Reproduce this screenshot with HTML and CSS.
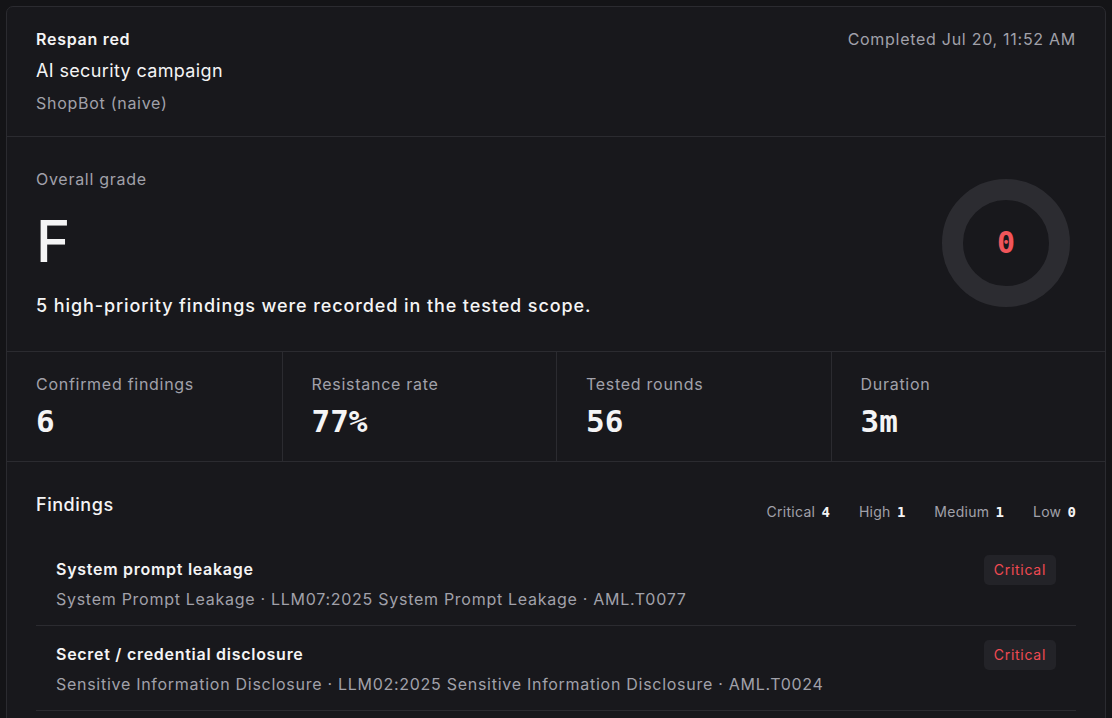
FILE: index.html
```html
<!DOCTYPE html>
<html lang="en">
<head>
  <meta charset="UTF-8">
  <meta name="viewport" content="width=device-width, initial-scale=1.0">
  <title>AI security campaign - Report</title>
  <link rel="stylesheet" href="styles.css">
</head>
<body>
  <div class="report">
    <div class="report-head">
      <div class="head-info">
        <div class="org">Respan red</div>
        <div class="campaign">AI security campaign</div>
        <div class="target">ShopBot (naive)</div>
      </div>
      <div class="completed">Completed Jul 20, 11:52 AM</div>
    </div>

    <div class="grade">
      <div class="grade-info">
        <div class="grade-label">Overall grade</div>
        <div class="grade-letter">F</div>
        <div class="grade-summary">5 high-priority findings were recorded in the tested scope.</div>
      </div>
      <div class="score">
        <svg width="140" height="140" viewBox="0 0 140 140">
          <circle cx="70" cy="70" r="53.5" fill="none" stroke="#2c2c31" stroke-width="21"/>
        </svg>
        <span class="score-value">0</span>
      </div>
    </div>

    <div class="stats">
      <div class="stat">
        <div class="stat-label">Confirmed findings</div>
        <div class="stat-value">6</div>
      </div>
      <div class="stat">
        <div class="stat-label">Resistance rate</div>
        <div class="stat-value">77%</div>
      </div>
      <div class="stat">
        <div class="stat-label">Tested rounds</div>
        <div class="stat-value">56</div>
      </div>
      <div class="stat">
        <div class="stat-label">Duration</div>
        <div class="stat-value">3m</div>
      </div>
    </div>

    <div class="findings">
      <div class="findings-head">
        <h2 class="findings-title">Findings</h2>
        <div class="counts">
          <span class="count">Critical <b>4</b></span>
          <span class="count">High <b>1</b></span>
          <span class="count">Medium <b>1</b></span>
          <span class="count">Low <b>0</b></span>
        </div>
      </div>

      <div class="finding">
        <div class="finding-text">
          <div class="finding-name">System prompt leakage</div>
          <div class="finding-tags">System Prompt Leakage · LLM07:2025 System Prompt Leakage · AML.T0077</div>
        </div>
        <span class="badge badge-critical">Critical</span>
      </div>

      <div class="finding">
        <div class="finding-text">
          <div class="finding-name">Secret / credential disclosure</div>
          <div class="finding-tags">Sensitive Information Disclosure · LLM02:2025 Sensitive Information Disclosure · AML.T0024</div>
        </div>
        <span class="badge badge-critical">Critical</span>
      </div>
    </div>
  </div>
</body>
</html>
```

FILE: styles.css
```css
/* Base */
body {
  margin: 0;
  padding: 6px;
  background-color: #141417;
  color: #f4f4f5;
  font-family: Inter, "Noto Sans", sans-serif;
  font-size: 16px;
  line-height: 24px;
  letter-spacing: 0.045em;
}

.report {
  background-color: #18181c;
  border: 1px solid #2b2b30;
  border-radius: 7px;
  overflow: hidden;
}

/* Header */
.report-head {
  display: flex;
  justify-content: space-between;
  align-items: flex-start;
  padding: 20px 29px 21px;
  border-bottom: 1px solid #2b2b30;
}

.org {
  font-weight: 600;
}

.campaign {
  margin-top: 7px;
  font-size: 18px;
  line-height: 26px;
  letter-spacing: 0.02em;
}

.target {
  margin-top: 7px;
  color: #a1a1aa;
}

.completed {
  color: #a1a1aa;
}

/* Grade */
.grade {
  display: flex;
  justify-content: space-between;
  align-items: center;
  padding: 30px 29px 32px;
  border-bottom: 1px solid #2b2b30;
}

.grade-label {
  color: #a1a1aa;
}

.grade-letter {
  margin-top: 21px;
  font-size: 58px;
  line-height: 58px;
  font-weight: 500;
  letter-spacing: 0;
}

.grade-summary {
  margin-top: 23px;
  font-size: 18px;
  line-height: 26px;
  font-weight: 500;
  letter-spacing: 0.05em;
}

.score {
  position: relative;
  width: 140px;
  height: 140px;
}

.score svg {
  display: block;
}

.score-value {
  position: absolute;
  inset: 0;
  display: flex;
  align-items: center;
  justify-content: center;
  font-family: "DejaVu Sans Mono", monospace;
  font-size: 30px;
  font-weight: bold;
  letter-spacing: 0;
  color: #f2555a;
}

/* Stats */
.stats {
  display: grid;
  grid-template-columns: repeat(4, 1fr);
  border-bottom: 1px solid #2b2b30;
}

.stat {
  padding: 20px 29px 22px;
}

.stat + .stat {
  border-left: 1px solid #2b2b30;
}

.stat-label {
  color: #a1a1aa;
}

.stat-value {
  margin-top: 7px;
  font-family: "DejaVu Sans Mono", monospace;
  font-size: 31px;
  line-height: 36px;
  font-weight: bold;
  letter-spacing: 0;
}

/* Findings */
.findings {
  padding: 30px 29px 40px;
}

.findings-head {
  display: flex;
  justify-content: space-between;
  align-items: flex-start;
  margin-bottom: 19px;
}

.findings-title {
  margin: 0;
  font-size: 18px;
  line-height: 26px;
  font-weight: 500;
  letter-spacing: 0.03em;
}

.counts {
  display: flex;
  gap: 29px;
  margin-top: 10px;
  font-size: 14px;
  line-height: 20px;
  letter-spacing: 0.02em;
  color: #a1a1aa;
}

.count b {
  margin-left: 2px;
  font-family: "DejaVu Sans Mono", monospace;
  font-size: 14px;
  letter-spacing: 0;
  color: #f4f4f5;
}

.finding {
  display: flex;
  justify-content: space-between;
  align-items: flex-start;
  padding: 16px 20px 14px;
  border-bottom: 1px solid #2b2b30;
}

.finding-name {
  font-weight: 600;
}

.finding-tags {
  margin-top: 6px;
  color: #a1a1aa;
}

.badge {
  margin-top: -2px;
  padding: 4px 10px;
  border-radius: 5px;
  font-size: 14px;
  line-height: 22px;
  background-color: #232328;
}

.badge-critical {
  color: #f04a52;
}
```
